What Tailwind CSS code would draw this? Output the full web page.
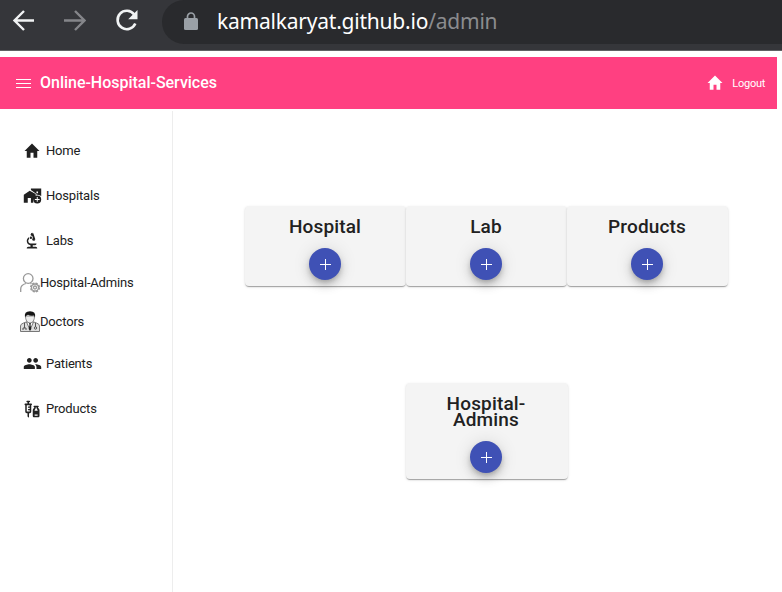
<!DOCTYPE html>
<html lang="en">
<head>
<meta charset="utf-8">
<title>Online-Hospital-Services</title>
<script src="https://cdn.jsdelivr.net/npm/@tailwindcss/browser@4"></script>
</head>
<body class="w-[782px] h-[592px] overflow-hidden bg-white font-['Roboto',sans-serif] text-[#212121]">
<header class="h-[51px] bg-[#35363a] border-b border-[#606164] flex items-start">
  <div class="w-[162px] h-[42px] shrink-0 flex items-center pl-3">
    <svg class="w-[22px] h-[22px]" viewBox="0 0 22 22" fill="none" stroke="#f1f3f4" stroke-width="2.4"><path d="M22 10.5H2.5M12 1L2.5 10.5L12 20"/></svg>
    <svg class="w-[22px] h-[22px] ml-[30px]" viewBox="0 0 22 22" fill="none" stroke="#85868a" stroke-width="2.4"><path d="M0 10.5H20.500M11 1L20.500 10.500L11 20"/></svg>
    <svg class="w-[24px] h-[24px] ml-[29px]" viewBox="0 0 24 24"><path d="M19.200 5.500A9.200 9.200 0 1 0 20.300 14.500" fill="none" stroke="#f1f3f4" stroke-width="2.600"/><path d="M22.500 1V10.300H13.200Z" fill="#f1f3f4"/></svg>
  </div>
  <div class="grow h-[44px] bg-[#292a2d] rounded-l-[22px] flex items-center pl-[22px] pb-[2px]">
    <svg class="w-[14px] h-[18px]" viewBox="0 0 14 18"><path d="M3.500 8V4.500a3.500 3.500 0 0 1 7 0V8" fill="none" stroke="#9aa0a6" stroke-width="1.700"/><rect y="6" width="14" height="12" rx="1.500" fill="#9aa0a6"/></svg>
    <span class="ml-[19px] font-['Noto_Sans',sans-serif] text-[21px] leading-[30px] tracking-[-0.22px] whitespace-nowrap text-white">kamalkaryat.github.io<span class="text-[#8b8c8f]">/admin</span></span>
  </div>
</header>
<nav class="mt-[6px] w-[777px] h-[52px] bg-[#ff4081] text-white flex items-center pl-4 pr-3">
  <svg class="w-[15px] h-[9px]" viewBox="0 0 15 9" fill="#fff" shape-rendering="crispEdges"><path d="M0 0h15v1H0zM0 4h15v1H0zM0 8h15v1H0z"/></svg>
  <span class="ml-[9px] text-[16px] leading-5 font-medium tracking-[-0.02px]">Online-Hospital-Services</span>
  <svg class="ml-auto w-[18px] h-[20px]" viewBox="0 0 24 24" fill="#fff" preserveAspectRatio="none"><path d="M10 20v-6h4v6h5v-8h3L12 3 2 12h3v8z"/></svg>
  <span class="ml-[8px] text-[11px] leading-4 tracking-[-0.28px] pt-px">Logout</span>
</nav>
<div class="flex h-[483px] pt-[2px]">
  <aside class="w-[173px] shrink-0 border-r border-[#ededed] pt-[17px] text-[13px] tracking-[-0.18px]">
    <a class="h-[45px] flex items-center pl-[23px]"><svg class="w-[18px] h-[20px] mr-[5px]" viewBox="0 0 24 24" fill="#212121" preserveAspectRatio="none"><path d="M10 20v-6h4v6h5v-8h3L12 3 2 12h3v8z"/></svg><span>Home</span></a>
    <a class="h-[45px] flex items-center pl-[23px]"><svg class="w-[19px] h-[19px] mr-[4px]" viewBox="0 0 24 24" fill="#212121"><path d="M1 11v10h5v-6h4v6h3c-.4-3 .9-6 3-7v-4L8.500 6z"/><path d="M10 3v1.970l7 5V11c2.200 0 4 .4 6 1.700V3H10zm9 6h-2V7h2z"/><path fill-rule="evenodd" d="M18 12a5 5 0 1 0 0 10 5 5 0 0 0 0-10zm3 5.600h-2.400V20h-1.200v-2.400H15v-1.200h2.400V14h1.200v2.400H21z"/></svg><span>Hospitals</span></a>
    <a class="h-[45px] flex items-center pl-[23px]"><svg class="w-[18px] h-[20px] mr-[5px]" viewBox="0 0 24 24" fill="#212121" preserveAspectRatio="none"><path d="M7 19c-1.100 0-2 .9-2 2h14c0-1.100-.9-2-2-2h-4v-2h3c1.100 0 2-.9 2-2h-8c-1.660 0-3-1.340-3-3 0-1.090.590-2.040 1.460-2.560C8.170 9.030 8 8.540 8 8c0-.210.040-.420.090-.620C6.280 8.130 5 9.920 5 12c0 2.760 2.240 5 5 5v2H7z"/><path d="M10.560 5.510C11.910 5.540 13 6.640 13 8c0 .750-.330 1.410-.850 1.870l.590 1.620.940-.340.340.940 1.880-.680-.340-.940.940-.340-2.740-7.520-.940.340-.340-.940-1.880.680.340.940-.940.350z"/><circle cx="10.500" cy="8" r="1.500"/></svg><span>Labs</span></a>
    <a class="h-[39px] flex items-center pl-5"><svg class="w-5 h-5" viewBox="0 0 20 20" fill="none" stroke="#999" stroke-width="1.300"><circle cx="8.200" cy="5.500" r="4.800"/><path d="M.7 19v-3q0-4 5.200-5.500M10.500 10.300l1 .7"/><circle cx="15" cy="14.500" r="4.300" stroke-width="1.500" stroke-dasharray="2.200 1.180"/><circle cx="15" cy="14.500" r="3.500"/><circle cx="15" cy="14.500" r="1.500"/></svg><span>Hospital-Admins</span></a>
    <a class="h-[39px] flex items-center pl-5"><svg class="w-5 h-[21px]" viewBox="0 0 20 21"><path d="M.5 20.500V15q0-2 3-3l4-1.500h5l4 1.500q3 1 3 3v5.500z" fill="#dedede" stroke="#777"/><path d="M6.500 11l3.500 8 3.500-8z" fill="#fff" stroke="#777"/><path d="M9 12h2l-.5 2 .8 4-1.300 2-1.300-2 .8-4z" fill="#222"/><path d="M5.500 5q0 6.500 4.500 7 4.500-.5 4.500-7z" fill="#eee" stroke="#777" stroke-width=".8"/><path d="M5 6.500Q3.800.4 10 .3q6.200.1 5 6.200l-1-2q-4 .5-6-.8L5.800 5z" fill="#151515"/><path d="M4.500 12v5m-1.500 2v-2h3v2M15.500 12v4" fill="none" stroke="#555"/><circle cx="15.500" cy="17" r="1.200" fill="none" stroke="#555"/></svg><span>Doctors</span></a>
    <a class="h-[45px] flex items-center pl-[23px]"><svg class="w-[19px] h-[19px] mr-[4px]" viewBox="0 0 24 24" fill="#212121"><path d="M16 11c1.660 0 2.990-1.340 2.990-3S17.660 5 16 5c-1.660 0-3 1.340-3 3s1.340 3 3 3zm-8 0c1.660 0 2.990-1.340 2.990-3S9.660 5 8 5C6.340 5 5 6.340 5 8s1.340 3 3 3zm0 2c-2.330 0-7 1.170-7 3.500V19h14v-2.500c0-2.330-4.670-3.500-7-3.500zm8 0c-.290 0-.620.020-.970.050 1.160.840 1.970 1.970 1.970 3.450V19h6v-2.500c0-2.330-4.670-3.500-7-3.500z"/></svg><span>Patients</span></a>
    <a class="h-[45px] flex items-center pl-[23px]"><svg class="w-[18px] h-[20px] mr-[5px]" viewBox="0 0 24 24" fill="#212121" preserveAspectRatio="none"><path fill-rule="evenodd" d="M11 5.500H8V4h.5a1 1 0 0 0 0-2h-3a1 1 0 0 0 0 2H6v1.500H3c-.550 0-1 .450-1 1s.450 1 1 1V15c0 1.100.9 2 2 2h1v4l2 1.500V17h1c1.100 0 2-.9 2-2V7.500c.550 0 1-.450 1-1s-.450-1-1-1zM9 9H7.250a.750.750 0 0 0 0 1.500H9V12H7.250a.750.750 0 0 0 0 1.500H9V15H5V7.500h4z"/><path fill-rule="evenodd" d="M20 10.500V10a1 1 0 0 0 0-2h-5a1 1 0 0 0 0 2v.5c0 .5-2 1.160-2 3V20c0 1.100.9 2 2 2h5c1.100 0 2-.9 2-2v-6.500c0-1.840-2-2.500-2-3zm-3-.5h1v.5c0 1.600 1.500 2 1.500 3v.5h-4v-.5c0-1 1.500-1.400 1.500-3zM19.500 20h-4v-1.500h4z"/></svg><span>Products</span></a>
  </aside>
  <main class="pl-[72px] pt-[95px]">
    <div class="grid grid-cols-[161px_161px_161px]">
      <section class="h-[80px] rounded bg-[#f4f4f4] shadow-[0_2px_1px_-1px_rgba(0,0,0,.2),0_1px_1px_rgba(0,0,0,.14),0_1px_3px_rgba(0,0,0,.12)] flex flex-col items-center pt-[13px] pr-px">
        <h2 class="text-[19px] leading-4 font-medium tracking-[0.15px]">Hospital</h2>
        <button class="mt-[13px] size-8 rounded-full bg-[#3f51b5] shadow-[0_3px_5px_-1px_rgba(0,0,0,.2),0_6px_10px_rgba(0,0,0,.14),0_1px_18px_rgba(0,0,0,.12)] flex items-center justify-center"><svg class="w-[11px] h-[11px]" viewBox="0 0 11 11" fill="#fff" shape-rendering="crispEdges"><path d="M5 0h1v5h5v1H6v5H5V6H0V5h5z"/></svg></button>
      </section>
      <section class="h-[80px] rounded bg-[#f4f4f4] shadow-[0_2px_1px_-1px_rgba(0,0,0,.2),0_1px_1px_rgba(0,0,0,.14),0_1px_3px_rgba(0,0,0,.12)] flex flex-col items-center pt-[13px] pr-px">
        <h2 class="text-[19px] leading-4 font-medium tracking-[0.15px]">Lab</h2>
        <button class="mt-[13px] size-8 rounded-full bg-[#3f51b5] shadow-[0_3px_5px_-1px_rgba(0,0,0,.2),0_6px_10px_rgba(0,0,0,.14),0_1px_18px_rgba(0,0,0,.12)] flex items-center justify-center"><svg class="w-[11px] h-[11px]" viewBox="0 0 11 11" fill="#fff" shape-rendering="crispEdges"><path d="M5 0h1v5h5v1H6v5H5V6H0V5h5z"/></svg></button>
      </section>
      <section class="h-[80px] rounded bg-[#f4f4f4] shadow-[0_2px_1px_-1px_rgba(0,0,0,.2),0_1px_1px_rgba(0,0,0,.14),0_1px_3px_rgba(0,0,0,.12)] flex flex-col items-center pt-[13px] pr-px">
        <h2 class="text-[19px] leading-4 font-medium tracking-[0.15px]">Products</h2>
        <button class="mt-[13px] size-8 rounded-full bg-[#3f51b5] shadow-[0_3px_5px_-1px_rgba(0,0,0,.2),0_6px_10px_rgba(0,0,0,.14),0_1px_18px_rgba(0,0,0,.12)] flex items-center justify-center"><svg class="w-[11px] h-[11px]" viewBox="0 0 11 11" fill="#fff" shape-rendering="crispEdges"><path d="M5 0h1v5h5v1H6v5H5V6H0V5h5z"/></svg></button>
      </section>
    </div>
    <section class="mt-[97px] ml-[160.5px] w-[162px] h-[96px] rounded bg-[#f4f4f4] shadow-[0_2px_1px_-1px_rgba(0,0,0,.2),0_1px_1px_rgba(0,0,0,.14),0_1px_3px_rgba(0,0,0,.12)] flex flex-col items-center pt-[13px] pr-px">
      <h2 class="text-[19px] leading-4 font-medium tracking-[0.15px] text-center">Hospital-<br>Admins</h2>
      <button class="mt-[13px] size-8 rounded-full bg-[#3f51b5] shadow-[0_3px_5px_-1px_rgba(0,0,0,.2),0_6px_10px_rgba(0,0,0,.14),0_1px_18px_rgba(0,0,0,.12)] flex items-center justify-center"><svg class="w-[11px] h-[11px]" viewBox="0 0 11 11" fill="#fff" shape-rendering="crispEdges"><path d="M5 0h1v5h5v1H6v5H5V6H0V5h5z"/></svg></button>
    </section>
  </main>
</div>
</body>
</html>
